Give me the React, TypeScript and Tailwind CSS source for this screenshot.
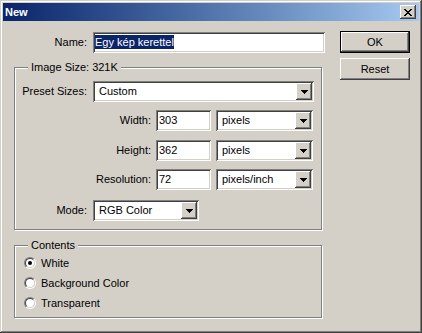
import React from 'react';

const face = 'bg-[#d4d0c8]';
const sunken =
    'shadow-[inset_1px_1px_#808080,inset_-1px_-1px_#ffffff,inset_2px_2px_#404040,inset_-2px_-2px_#d4d0c8]';
const raised =
    'shadow-[inset_-1px_-1px_#404040,inset_1px_1px_#ffffff,inset_-2px_-2px_#808080]';

const DownArrow = () => (
    <svg width="7" height="4" viewBox="0 0 7 4" shapeRendering="crispEdges">
        <rect x="0" y="0" width="7" height="1" fill="#000" />
        <rect x="1" y="1" width="5" height="1" fill="#000" />
        <rect x="2" y="2" width="3" height="1" fill="#000" />
        <rect x="3" y="3" width="1" height="1" fill="#000" />
    </svg>
);

const CloseGlyph = () => (
    <svg width="8" height="7" viewBox="0 0 8 7" shapeRendering="crispEdges">
        {[0, 1, 2, 3, 4, 5, 6].map(r => {
            const a = r <= 3 ? r : 6 - r;
            return (
                <g key={r}>
                    <rect x={a} y={r} width="2" height="1" fill="#000" />
                    <rect x={6 - a} y={r} width="2" height="1" fill="#000" />
                </g>
            );
        })}
    </svg>
);

const TextField = ({ value, className }: { value: string; className: string }) => (
    <div className={`h-[21px] bg-white p-[2px] pl-[3px] leading-[17px] ${sunken} ${className}`}>{value}</div>
);

const Select = ({ value, className }: { value: string; className: string }) => (
    <div className={`flex h-[21px] bg-white p-[2px] ${sunken} ${className}`}>
        <span className="flex-1 pl-[4px] leading-[17px]">{value}</span>
        <div className={`flex h-[17px] w-[16px] items-center justify-center ${face} ${raised}`}>
            <DownArrow />
        </div>
    </div>
);

const Button = ({ label, isDefault }: { label: string; isDefault?: boolean }) => (
    <div className={`h-[22px] w-[70px] ${isDefault ? 'border border-black' : ''}`}>
        <div className={`flex h-full w-full items-center justify-center ${face} ${raised}`}>{label}</div>
    </div>
);

const Radio = ({ label, checked }: { label: string; checked?: boolean }) => (
    <div className="flex h-[20px] items-center">
        <div className="ml-[9px] h-[12px] w-[12px] rounded-full border border-t-[#808080] border-l-[#808080] border-b-white border-r-white">
            <div className="flex h-full w-full items-center justify-center rounded-full border border-t-[#404040] border-l-[#404040] border-b-[#d4d0c8] border-r-[#d4d0c8] bg-white">
                {checked && <div className="h-[4px] w-[4px] rounded-full bg-black" />}
            </div>
        </div>
        <span className="ml-[5px]">{label}</span>
    </div>
);

const groupBox =
    'w-[308px] min-w-0 border border-[#808080] p-0 shadow-[inset_1px_1px_#ffffff,1px_1px_#ffffff]';
const legend = `ml-[13px] px-[3px] leading-[13px] ${face}`;

export default function App() {
    return (
        <div
            className={`flex h-[333px] w-[422px] flex-col p-[3px] font-['Liberation_Sans',Arial,sans-serif] text-[11px] text-black ${face} shadow-[inset_-1px_-1px_#404040,inset_1px_1px_#d4d0c8,inset_-2px_-2px_#808080,inset_2px_2px_#ffffff]`}
        >
            <div className="flex h-[18px] items-center justify-between bg-linear-to-r from-[#0a246a] to-[#a6caf0] pr-[3px] pl-[2px]">
                <span className="font-bold text-white">New</span>
                <div className={`flex h-[14px] w-[16px] items-center justify-center ${face} ${raised}`}>
                    <CloseGlyph />
                </div>
            </div>

            <div className="flex">
                <div className="ml-[11px] w-[311px]">
                    <div className="mt-[11px] flex h-[21px] items-center">
                        <span className="w-[73px] text-right">Name:</span>
                        <div className={`ml-[6px] h-[21px] w-[232px] bg-white p-[2px] ${sunken}`}>
                            <span className="inline-block bg-[#0a246a] leading-[14px] text-white">Egy kép kerettel</span>
                        </div>
                    </div>

                    <fieldset className={`mt-[8px] pb-[8px] ${groupBox}`}>
                        <legend className={legend}>Image Size: 321K</legend>
                        <div className="mt-[7px] flex items-center">
                            <span className="w-[72px] text-right">Preset Sizes:</span>
                            <Select value="Custom" className="ml-[6px] w-[221px]" />
                        </div>
                        <div className="mt-[8px] flex items-center">
                            <span className="w-[136px] text-right">Width:</span>
                            <TextField value="303" className="ml-[5px] w-[55px]" />
                            <Select value="pixels" className="ml-[5px] w-[97px]" />
                        </div>
                        <div className="mt-[9px] flex items-center">
                            <span className="w-[136px] text-right">Height:</span>
                            <TextField value="362" className="ml-[5px] w-[55px]" />
                            <Select value="pixels" className="ml-[5px] w-[97px]" />
                        </div>
                        <div className="mt-[8px] flex items-center">
                            <span className="w-[136px] text-right">Resolution:</span>
                            <TextField value="72" className="ml-[5px] w-[55px]" />
                            <Select value="pixels/inch" className="ml-[5px] w-[97px]" />
                        </div>
                        <div className="mt-[10px] flex items-center">
                            <span className="w-[72px] text-right">Mode:</span>
                            <Select value="RGB Color" className="ml-[6px] w-[106px]" />
                        </div>
                    </fieldset>

                    <fieldset className={`mt-[9px] pt-[1px] pb-[4px] ${groupBox}`}>
                        <legend className={legend}>Contents</legend>
                        <Radio label="White" checked />
                        <Radio label="Background Color" />
                        <Radio label="Transparent" />
                    </fieldset>
                </div>

                <div className="mt-[10px] ml-[15px] flex flex-col gap-[5px]">
                    <Button label="OK" isDefault />
                    <Button label="Reset" />
                </div>
            </div>
        </div>
    );
}
